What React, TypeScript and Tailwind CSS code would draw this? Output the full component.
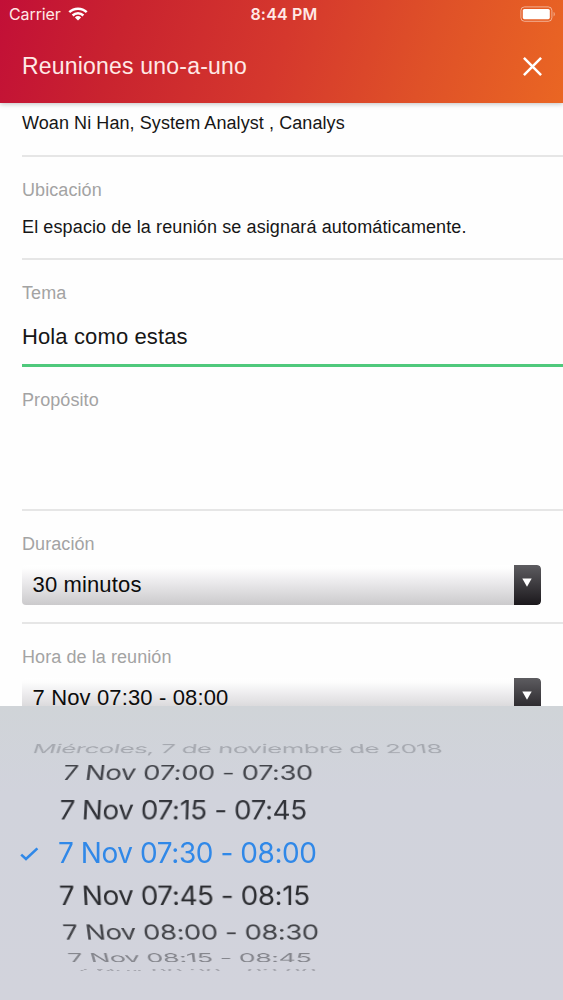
import clsx from 'clsx';

type Option = {
  label: string;
  angle: number;
  tone: string;
  selected?: boolean;
};

// Radius of the picker wheel, in px
const RADIUS = 129;

const options: Option[] = [
  { label: '7 Nov 07:00 - 07:30', angle: 39.5, tone: 'text-[#43454b]' },
  { label: '7 Nov 07:15 - 07:45', angle: 19.5, tone: 'text-[#303238]' },
  { label: '7 Nov 07:30 - 08:00', angle: 0, tone: 'text-[#3088e8]', selected: true },
  { label: '7 Nov 07:45 - 08:15', angle: -19.5, tone: 'text-[#2b2c30]' },
  { label: '7 Nov 08:00 - 08:30', angle: -39, tone: 'text-[#434449]' },
  { label: '7 Nov 08:15 - 08:45', angle: -58.5, tone: 'text-[#85868d]' },
  { label: '7 Nov 08:30 - 09:00', angle: -79, tone: 'text-[#a3a4ac]' },
];

function wheelTransform(angle: number): string {
  return `translateZ(${-RADIUS}px) rotateX(${angle}deg) translateZ(${RADIUS}px)`;
}

function StatusBar() {
  return (
    <div className="grid h-7 grid-cols-3 items-center pl-[9px] pr-[7px] font-['Inter',sans-serif] text-[#ffe9e6]">
      <div className="flex items-center gap-[7px]">
        <span className="text-[16px] leading-none tracking-[-0.1px]">Carrier</span>
        <svg width="20" height="14" viewBox="0 0 20 14" fill="none" stroke="white" strokeWidth="2.5">
          <path d="M1.3 5.2a12.4 12.4 0 0 1 17.4 0" />
          <path d="M4.6 8.5a7.8 7.8 0 0 1 10.8 0" />
          <path d="M10 13.6 6.9 10.5a4.5 4.5 0 0 1 6.2 0Z" fill="white" stroke="none" />
        </svg>
      </div>
      <span className="pl-[3px] text-center text-[16px] leading-none font-semibold tracking-[0.2px] whitespace-nowrap">8:44 PM</span>
      <svg className="justify-self-end" width="36" height="16" viewBox="0 0 36 16" fill="none">
        <rect x="0.9" y="0.9" width="31" height="14.4" rx="3.6" stroke="white" strokeOpacity="0.5" />
        <rect x="2.8" y="3" width="27" height="10.2" rx="1.6" fill="white" />
        <path d="M33.6 5.7c1.6.8 1.6 4 0 4.8Z" fill="white" fillOpacity="0.5" />
      </svg>
    </div>
  );
}

function Header() {
  return (
    <header className="relative z-10 h-[103px] shrink-0 bg-[linear-gradient(108deg,#c20f37_0%,#c9232f_22%,#d5382d_50%,#df5128_75%,#ea6623_100%)] shadow-[0_1px_5px_rgba(0,0,0,0.25)]">
      <StatusBar />
      <div className="flex h-[76px] items-center justify-between pr-[21px] pl-[22px]">
        <h1 className="text-[23px] leading-none tracking-[0.2px] text-[#ffe9e6]">Reuniones uno-a-uno</h1>
        <svg width="19" height="19" viewBox="0 0 19 19" stroke="white" strokeWidth="2.5">
          <path d="M0.9 0.9 18.1 18.1M18.1 0.9 0.9 18.1" />
        </svg>
      </div>
    </header>
  );
}

function Label({ children }: { children: string }) {
  return <div className="text-[18px] leading-5 tracking-[0.08px] text-[#a3a3a3]">{children}</div>;
}

function Select({ value }: { value: string }) {
  return (
    <div className="mr-[22px] flex h-10 overflow-hidden rounded-[4px]">
      <div className="flex-1 bg-[linear-gradient(#ffffff_0%,#fdfdfd_10%,#efeef0_35%,#cbcacc_100%)] pl-[10.5px] text-[22px] leading-[40px] tracking-[0.14px] text-[#0c0c0c]">
        {value}
      </div>
      <div className="flex w-[27px] justify-center rounded-r-[4px] bg-[linear-gradient(#5d5c60,#1b181c)] pt-[13px]">
        <svg className="-ml-0.5" width="10" height="9" viewBox="0 0 10 9" fill="white">
          <path d="M0.3 0.5h9.4L5 8.8Z" />
        </svg>
      </div>
    </div>
  );
}

function Picker() {
  return (
    <div className="relative z-10 grid h-[294px] shrink-0 overflow-hidden bg-[linear-gradient(#d0d4d8_0%,#d1d3dc_30%,#d2d3dc_100%)] font-['Inter',sans-serif] perspective-[1290px]">
      <div
        className="[grid-area:1/1] h-[294px] pl-[21.5px] text-[27px] leading-[290px] tracking-[-0.55px] whitespace-nowrap text-[#a6a9b0]"
        style={{ transform: wheelTransform(56.5) }}
      >
        Miércoles, 7 de noviembre de 2018
      </div>
      {options.map((option) => (
        <div
          key={option.label}
          className={clsx('flex h-[294px] items-center [grid-area:1/1] pl-[20px] text-[28px] tracking-[-0.43px] whitespace-nowrap', option.tone)}
          style={{ transform: wheelTransform(option.angle) }}
        >
          <span className="w-[38px]">
            {option.selected && (
              <svg className="mt-[2px]" width="19" height="14" viewBox="0 0 19 14" fill="none" stroke="currentColor" strokeWidth="2.6">
                <path d="M1.2 7.6 6 12 17.4 1.4" />
              </svg>
            )}
          </span>
          <span>{option.label}</span>
        </div>
      ))}
    </div>
  );
}

export default function App() {
  return (
    <div className="flex h-[1000px] w-[563px] flex-col overflow-hidden bg-[#fefefe] font-['Liberation_Sans',Arial,sans-serif] text-[#161616]">
      <Header />
      <main className="flex h-[603px] shrink-0 flex-col overflow-hidden pl-[22px]">
        <div className="h-[54px] shrink-0 border-b-2 border-[#e6e6e6] pt-[10px] text-[18px] leading-5 tracking-[0.08px]">
          Woan Ni Han, System Analyst , Canalys
        </div>

        <div className="h-[103px] shrink-0 border-b-2 border-[#e6e6e6] pt-[23px]">
          <Label>Ubicación</Label>
          <div className="mt-[17px] text-[18px] leading-5 tracking-[0.12px]">
            El espacio de la reunión se asignará automáticamente.
          </div>
        </div>

        <div className="h-[107px] shrink-0 border-b-3 border-[#4fc97c] pt-[23px]">
          <Label>Tema</Label>
          <div className="mt-[22px] text-[22px] leading-6 tracking-[0.12px]">Hola como estas</div>
        </div>

        <div className="h-[144px] shrink-0 border-b-2 border-[#e6e6e6] pt-[23px]">
          <Label>Propósito</Label>
        </div>

        <div className="h-[113px] shrink-0 border-b-2 border-[#e6e6e6] pt-[23px]">
          <Label>Duración</Label>
          <div className="mt-[11px]">
            <Select value="30 minutos" />
          </div>
        </div>

        <div className="shrink-0 pt-[23px]">
          <Label>Hora de la reunión</Label>
          <div className="mt-[11px]">
            <Select value="7 Nov 07:30 - 08:00" />
          </div>
        </div>
      </main>
      <Picker />
    </div>
  );
}
